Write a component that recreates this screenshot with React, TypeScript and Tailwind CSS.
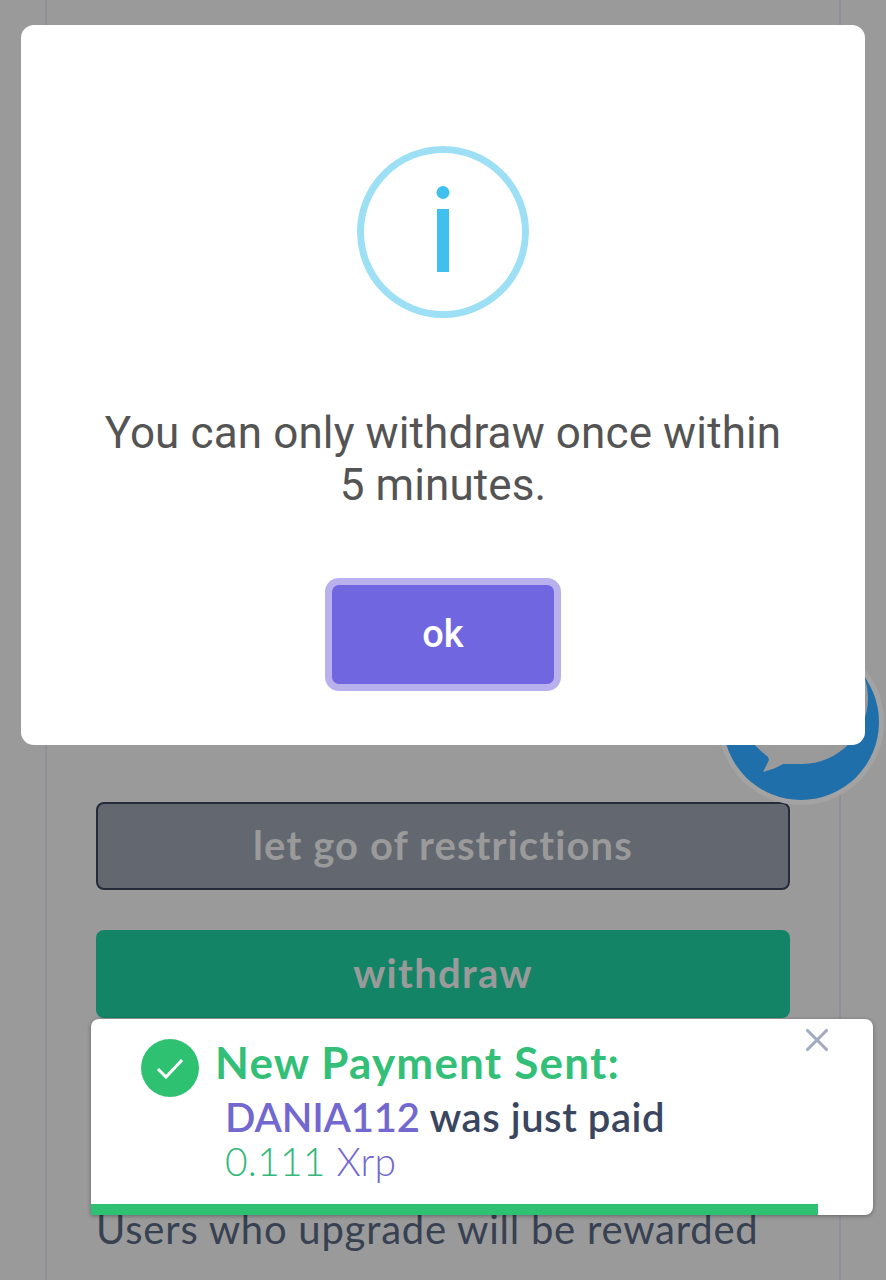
import { X } from "lucide-react";

function InfoIcon() {
  return (
    <svg width="172" height="172" viewBox="0 0 172 172" fill="none">
      <circle cx="86" cy="86" r="82.5" stroke="#9de0f5" strokeWidth="7" />
      <ellipse cx="86" cy="46.5" rx="6.5" ry="6.5" fill="#3fc0ee" />
      <rect x="80" y="63" width="12" height="63" fill="#3fc0ee" />
    </svg>
  );
}

function ChatBubble() {
  return (
    <div className="absolute left-[718px] top-[639px] rounded-full bg-[#a3a3a3] p-[5px]">
      <svg width="156" height="156" viewBox="0 0 156 156" className="block">
        <circle cx="78" cy="78" r="78" fill="#1f6fab" />
        <path d="M78.5 -12C42 -12 12.5 17.5 12.5 54c0 23 12 43 32.5 59l1 3-6 12c8-2 15-5 20-8 6 0 12 0 19 0 36 0 66-30 66-66S115-12 78.5-12z" fill="#9a9a9a" />
      </svg>
    </div>
  );
}

function AlertModal() {
  return (
    <div className="absolute left-[21px] top-[25px] flex h-[720px] w-[844px] flex-col items-center rounded-[13px] bg-white pt-[121px]">
      <InfoIcon />
      <p className="mt-[89px] w-[700px] text-center font-['Roboto',sans-serif] text-[44px] leading-[52px] tracking-[0.12px] text-[#545454]">
        You can only withdraw once within 5 minutes.
      </p>
      <button className="mt-[74px] flex h-[99px] w-[222px] items-center justify-center rounded-[7px] bg-[#7066e0] font-['Roboto',sans-serif] text-[38px] font-medium text-white shadow-[0_0_0_7px_#b8b1ee]">
        ok
      </button>
    </div>
  );
}

function PaymentToast() {
  return (
    <div className="absolute left-[91px] top-[1019px] h-[196px] w-[782px] overflow-hidden rounded-[8px] rounded-bl-none bg-white font-['Lato',sans-serif] shadow-[0_1px_4px_rgba(0,0,0,0.35)]">
      <div className="flex items-center gap-[16px] pl-[50px] pt-[20px]">
        <div className="flex size-[58px] items-center justify-center rounded-full bg-[#2fc172]">
          <svg width="28" height="22" viewBox="0 0 28 22" fill="none">
            <path d="M2 12l8 8L26 3" stroke="white" strokeWidth="3" />
          </svg>
        </div>
        <h4 className="-mt-[12px] text-[44px] leading-[50px] font-bold tracking-[1.2px] text-[#33bf77]">New Payment Sent:</h4>
      </div>
      <div className="pl-[134px]">
        <p className="-mt-[2px] text-[40px] leading-[44px] font-semibold tracking-[0.55px] text-[#3a4660]">
          <span className="tracking-[-0.2px] text-[#7367d0]">DANIA112</span> was just paid
        </p>
        <p className="text-[39px] leading-[44px] font-light tracking-[0.2px]">
          <span className="text-[#34b87a]">0.111</span> <span className="text-[#7367d0]">Xrp</span>
        </p>
      </div>
      <X className="absolute right-[37px] top-[2px] size-[38px] text-[#a3abc2]" strokeWidth={2} />
      <div className="absolute bottom-0 left-0 h-[11px] w-[727px] bg-[#2fc172]" />
    </div>
  );
}

export default function App() {
  return (
    <div className="relative h-[1280px] overflow-hidden bg-[#9a9a9a] font-['Lato',sans-serif]">
      <div className="ml-[45px] h-full w-[796px] border-x-2 border-[#8d9096] pl-[49px] pr-[49px]">
        <p className="pt-[18px] text-[40px] leading-[46px] tracking-[0.76px] text-[#374151]">Users who upgrade will be rewarded</p>
        <div className="mt-[738px] flex h-[88px] items-center justify-center rounded-[8px] border-2 border-[#252b3b] bg-[#636870] pb-[3px] text-[40px] font-bold tracking-[1.1px] text-[#9a9a9a]">
          let go of restrictions
        </div>
        <div className="mt-[40px] flex h-[88px] items-center justify-center rounded-[8px] bg-[#138566] pb-[3px] text-[40px] font-bold tracking-[1.3px] text-[#9a9a9a]">
          withdraw
        </div>
        <p className="mt-[188px] text-[40px] leading-[46px] tracking-[0.76px] text-[#374151]">Users who upgrade will be rewarded</p>
      </div>
      <ChatBubble />
      <AlertModal />
      <PaymentToast />
    </div>
  );
}
